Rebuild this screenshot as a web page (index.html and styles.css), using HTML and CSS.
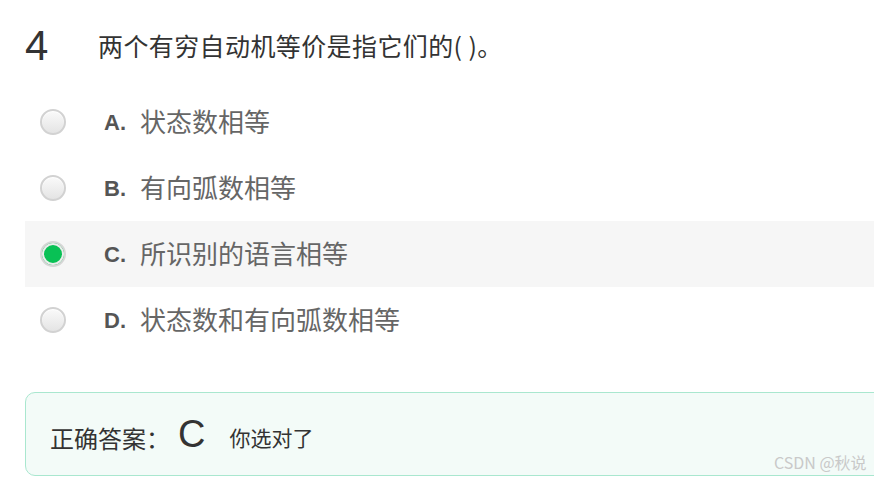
FILE: index.html
```html
<!DOCTYPE html>
<html lang="zh-CN">
<head>
<meta charset="utf-8">
<link rel="stylesheet" href="styles.css">
</head>
<body>
<div class="page">
  <div class="question">
    <div class="qnum">4</div>
    <div class="qtext">两个有穷自动机等价是指它们的( )。</div>
  </div>
  <ul class="options">
    <li class="option"><span class="radio"></span><span class="letter">A.</span><span class="otext">状态数相等</span></li>
    <li class="option"><span class="radio"></span><span class="letter">B.</span><span class="otext">有向弧数相等</span></li>
    <li class="option selected"><span class="radio checked"></span><span class="letter">C.</span><span class="otext">所识别的语言相等</span></li>
    <li class="option"><span class="radio"></span><span class="letter">D.</span><span class="otext">状态数和有向弧数相等</span></li>
  </ul>
  <div class="answer">
    <span class="alabel">正确答案：</span>
    <span class="aval">C</span>
    <span class="aresult">你选对了</span>
    <span class="watermark">CSDN @秋说</span>
  </div>
</div>
</body>
</html>
```
FILE: styles.css
```css
html, body {
  margin: 0;
  padding: 0;
  background: #fff;
  overflow: hidden;
}
body {
  font-family: "Liberation Sans", "Noto Sans CJK SC", sans-serif;
  color: #333;
}
.page {
  padding: 20px 0 0 25px;
  width: 849px;
  position: relative;
}
.question {
  display: flex;
  align-items: center;
  height: 52px;
}
.qnum {
  width: 73px;
  font-size: 42px;
  line-height: 52px;
  color: #333;
}
.qtext {
  font-family: "Noto Sans CJK SC", sans-serif;
  font-size: 25px;
  line-height: 1;
  letter-spacing: 0.4px;
  color: #333;
  margin-top: -1px;
}
.options {
  list-style: none;
  margin: 17px 0 0 0;
  padding: 0;
}
.option {
  display: flex;
  align-items: center;
  height: 66px;
  padding-left: 15px;
}
.option.selected {
  background: #f6f6f6;
}
.radio {
  width: 22px;
  height: 22px;
  border-radius: 50%;
  border: 2px solid #d2d2d2;
  background: linear-gradient(#fafafa, #e4e4e4);
  box-shadow: inset 0 1px 1px #fff;
  flex: none;
}
.radio.checked {
  border: 2px solid #d6d6d6;
  background: #09c155;
  box-shadow: inset 0 0 0 2px #ececec;
}
.letter {
  margin-left: 38px;
  width: 36px;
  font-family: "Liberation Sans", sans-serif;
  font-weight: bold;
  font-size: 22px;
  line-height: 1;
  color: #555;
  padding-top: 2px;
}
.otext {
  font-family: "Noto Sans CJK SC", sans-serif;
  font-size: 26px;
  line-height: 1;
  color: #666;
  margin-top: -2px;
}
.answer {
  position: relative;
  margin-top: 39px;
  margin-right: -30px;
  height: 82px;
  border: 1px solid #a9e7cf;
  border-radius: 10px;
  background: #f3fbf8;
  display: flex;
  align-items: center;
  padding-left: 24px;
  font-family: "Noto Sans CJK SC", sans-serif;
  color: #333;
}
.alabel {
  font-size: 24px;
  padding-top: 6px;
}
.aval {
  font-family: "Liberation Sans", sans-serif;
  font-size: 38px;
  margin-left: 8px;
  margin-right: 24px;
}
.aresult {
  font-size: 21px;
  padding-top: 6px;
}
.watermark {
  position: absolute;
  left: 748px;
  bottom: 1px;
  font-size: 16px;
  color: #c9c9c9;
  white-space: nowrap;
}
```
